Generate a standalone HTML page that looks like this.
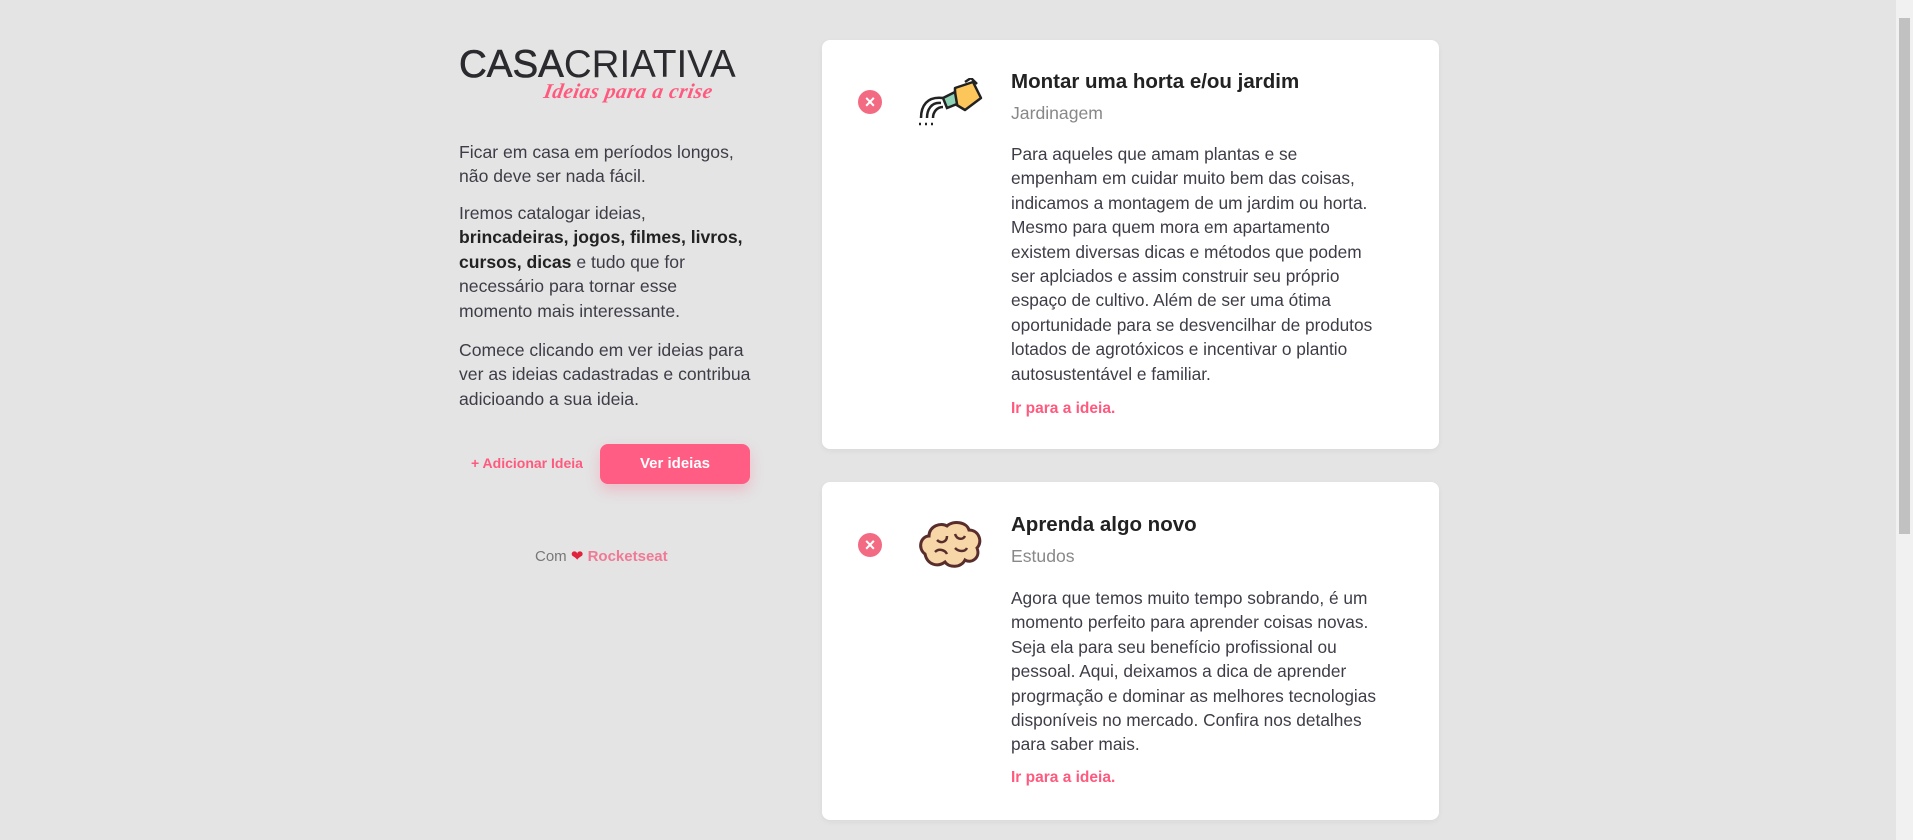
<!DOCTYPE html>
<html><head><meta charset="utf-8"><style>
*{margin:0;padding:0;box-sizing:border-box}
html,body{width:1913px;height:840px;overflow:hidden;background:#e4e4e4;font-family:"Liberation Sans",sans-serif;color:#3d3d47}
.abs{position:absolute}
.logo{left:459px;top:43px;font-size:38.5px;letter-spacing:0;color:#2b2b2f;white-space:nowrap}
.logo b{font-weight:normal;-webkit-text-stroke:0.6px #2b2b2f}
.logo span{font-weight:normal;-webkit-text-stroke:0}
.tag{left:544px;top:79px;font-family:"Liberation Serif",serif;font-style:italic;font-weight:bold;font-size:21px;color:#ff5a7e;letter-spacing:0.5px;transform:skewX(-10deg)}
.lt{left:459px;width:300px;font-size:17.6px;line-height:24.4px;color:#3d3d47}
.lt b{color:#222}
.add{left:471px;top:455px;font-size:14px;font-weight:bold;color:#ff5a7e}
.btn{left:600px;top:444px;width:150px;height:40px;border-radius:8px;background:#ff5d83;color:#fff;font-weight:bold;font-size:15px;text-align:center;line-height:40px;box-shadow:0 6px 14px rgba(255,93,131,.3)}
.com{left:535px;top:547px;font-size:15px;color:#777}
.com b{color:#f07a95}
.card{left:822px;width:617px;background:#fff;border-radius:8px;box-shadow:0 2px 6px rgba(0,0,0,.05)}
.x{width:24px;height:24px;border-radius:50%;background:#f36b82;color:#fff;font-size:18px;font-weight:bold;text-align:center;line-height:24px}
.t{left:1011px;font-size:20.5px;font-weight:bold;color:#222}
.s{left:1011px;font-size:17.6px;color:#888}
.p{left:1011px;font-size:17.3px;line-height:24.4px;color:#3d3d47;white-space:nowrap}
.l{left:1011px;font-size:15.5px;font-weight:bold;color:#ff5a7e}
.sb{left:1896px;top:0;width:17px;height:840px;background:#f1f1f1}
.th{left:1899px;top:18px;width:11px;height:516px;background:#c1c1c1}
</style></head><body>
<div class="abs logo"><b>CASA</b><span>CRIATIVA</span></div>
<div class="abs tag">Ideias para a crise</div>
<div class="abs lt" style="top:140px">Ficar em casa em períodos longos,<br>não deve ser nada fácil.</div>
<div class="abs lt" style="top:201px">Iremos catalogar ideias,<br><b>brincadeiras, jogos, filmes, livros,<br>cursos, dicas</b> e tudo que for<br>necessário para tornar esse<br>momento mais interessante.</div>
<div class="abs lt" style="top:338px">Comece clicando em ver ideias para<br>ver as ideias cadastradas e contribua<br>adicioando a sua ideia.</div>
<div class="abs add">+ Adicionar Ideia</div>
<div class="abs btn">Ver ideias</div>
<div class="abs com">Com <span style="color:#e0223a">❤</span> <b>Rocketseat</b></div>

<div class="abs card" style="top:40px;height:409px"></div>
<div class="abs x" style="left:858px;top:90px">×</div>
<svg class="abs" style="left:915px;top:78px" width="68" height="52" viewBox="0 0 68 52">
<path d="M40 10 L58 4 L66 20 L50 32 L40 26 Z" fill="#fdc65a" stroke="#222" stroke-width="2.5" stroke-linejoin="round"/>
<path d="M50 4 L56 0 L62 6" fill="none" stroke="#222" stroke-width="2.5"/>
<path d="M28 20 L40 14 L42 26 L32 30 Z" fill="#8fd3b6" stroke="#222" stroke-width="2.5"/>
<path d="M28 20 C12 18 6 28 6 40 M26 25 C16 24 12 32 12 40 M28 29 C22 29 18 34 18 40" fill="none" stroke="#222" stroke-width="2.5"/>
<path d="M4 46h2M10 46h2M16 46h2" stroke="#222" stroke-width="2.5"/>
</svg>
<div class="abs t" style="top:70px">Montar uma horta e/ou jardim</div>
<div class="abs s" style="top:103px">Jardinagem</div>
<div class="abs p" style="top:142px">Para aqueles que amam plantas e se<br>empenham em cuidar muito bem das coisas,<br>indicamos a montagem de um jardim ou horta.<br>Mesmo para quem mora em apartamento<br>existem diversas dicas e métodos que podem<br>ser aplciados e assim construir seu próprio<br>espaço de cultivo. Além de ser uma ótima<br>oportunidade para se desvencilhar de produtos<br>lotados de agrotóxicos e incentivar o plantio<br>autosustentável e familiar.</div>
<div class="abs l" style="top:400px">Ir para a ideia.</div>

<div class="abs card" style="top:482px;height:338px"></div>
<div class="abs x" style="left:858px;top:533px">×</div>
<svg class="abs" style="left:917px;top:518px" width="66" height="54" viewBox="0 0 66 54">
<path d="M8 36 C0 30 4 18 12 18 C12 8 24 4 30 8 C36 2 50 4 52 12 C62 12 66 24 60 30 C64 40 54 46 48 42 C44 50 32 50 28 44 C20 50 10 46 8 36 Z" fill="#f7d7a8" stroke="#5a2d2d" stroke-width="3"/>
<path d="M20 22 C24 26 30 24 30 18 M38 16 C40 22 46 22 48 18 M18 34 C22 30 28 32 30 36 M38 30 C42 34 48 34 50 30" fill="none" stroke="#5a2d2d" stroke-width="2.5"/>
</svg>
<div class="abs t" style="top:513px">Aprenda algo novo</div>
<div class="abs s" style="top:546px">Estudos</div>
<div class="abs p" style="top:586px">Agora que temos muito tempo sobrando, é um<br>momento perfeito para aprender coisas novas.<br>Seja ela para seu benefício profissional ou<br>pessoal. Aqui, deixamos a dica de aprender<br>progrmação e dominar as melhores tecnologias<br>disponíveis no mercado. Confira nos detalhes<br>para saber mais.</div>
<div class="abs l" style="top:769px">Ir para a ideia.</div>

<div class="abs sb"></div>
<div class="abs th"></div>
</body></html>
